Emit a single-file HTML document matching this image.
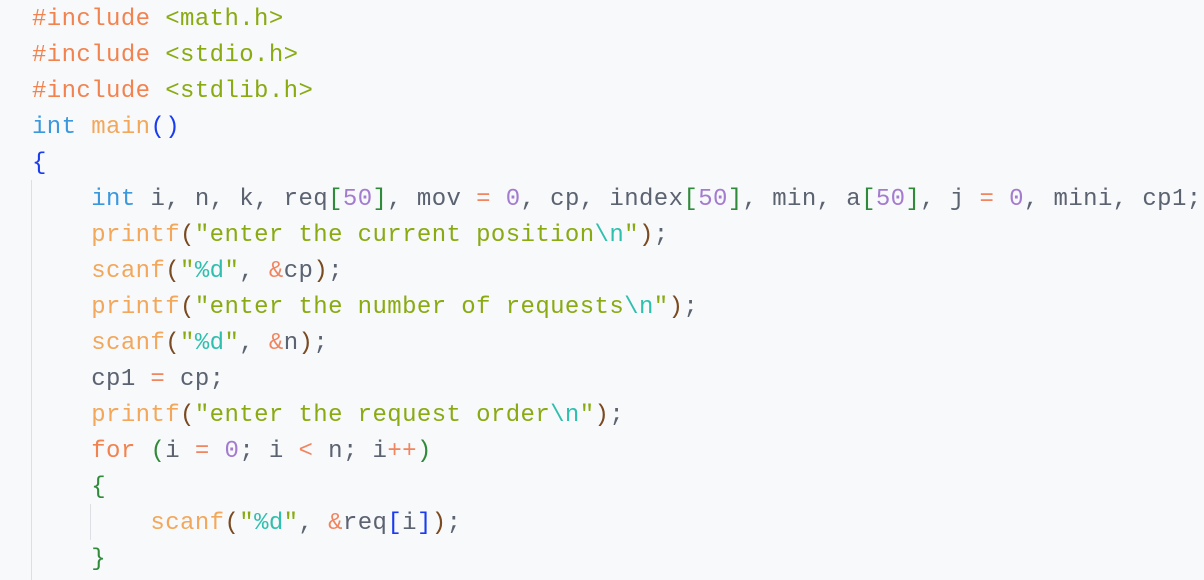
<!DOCTYPE html>
<html><head><meta charset="utf-8"><style>
body{margin:0;width:1204px;height:580px;background:#f8f9fb;overflow:hidden;position:relative}
pre{margin:0;position:absolute;left:32px;top:2px;font-family:"Liberation Mono",monospace;font-size:24px;line-height:36px;letter-spacing:0.4px;color:#5b6270}
.p{color:#f2834f}.s{color:#8aaa12}.k{color:#3b98dd}.f{color:#f2a75a}.b1{color:#1a3cf0}.g{color:#2f8a3a}.n{color:#a47ccf}.e{color:#2fbfae}.o{color:#f08560}.br{color:#7a4a20}
.guide{position:absolute;width:1px;background:#dcdfe4}
</style></head><body>
<div class="guide" style="left:31px;top:180px;height:400px"></div>
<div class="guide" style="left:90px;top:504px;height:36px"></div>
<pre><span class="p">#include</span> <span class="s">&lt;math.h&gt;</span>
<span class="p">#include</span> <span class="s">&lt;stdio.h&gt;</span>
<span class="p">#include</span> <span class="s">&lt;stdlib.h&gt;</span>
<span class="k">int</span> <span class="f">main</span><span class="b1">()</span>
<span class="b1">{</span>
    <span class="k">int</span> i, n, k, req<span class="g">[</span><span class="n">50</span><span class="g">]</span>, mov <span class="o">=</span> <span class="n">0</span>, cp, index<span class="g">[</span><span class="n">50</span><span class="g">]</span>, min, a<span class="g">[</span><span class="n">50</span><span class="g">]</span>, j <span class="o">=</span> <span class="n">0</span>, mini, cp1;
    <span class="f">printf</span><span class="br">(</span><span class="s">"enter the current position</span><span class="e">\n</span><span class="s">"</span><span class="br">)</span>;
    <span class="f">scanf</span><span class="br">(</span><span class="s">"</span><span class="e">%d</span><span class="s">"</span>, <span class="o">&amp;</span>cp<span class="br">)</span>;
    <span class="f">printf</span><span class="br">(</span><span class="s">"enter the number of requests</span><span class="e">\n</span><span class="s">"</span><span class="br">)</span>;
    <span class="f">scanf</span><span class="br">(</span><span class="s">"</span><span class="e">%d</span><span class="s">"</span>, <span class="o">&amp;</span>n<span class="br">)</span>;
    cp1 <span class="o">=</span> cp;
    <span class="f">printf</span><span class="br">(</span><span class="s">"enter the request order</span><span class="e">\n</span><span class="s">"</span><span class="br">)</span>;
    <span class="p">for</span> <span class="g">(</span>i <span class="o">=</span> <span class="n">0</span>; i <span class="o">&lt;</span> n; i<span class="o">++</span><span class="g">)</span>
    <span class="g">{</span>
        <span class="f">scanf</span><span class="br">(</span><span class="s">"</span><span class="e">%d</span><span class="s">"</span>, <span class="o">&amp;</span>req<span class="b1">[</span>i<span class="b1">]</span><span class="br">)</span>;
    <span class="g">}</span>
</pre>
</body></html>
